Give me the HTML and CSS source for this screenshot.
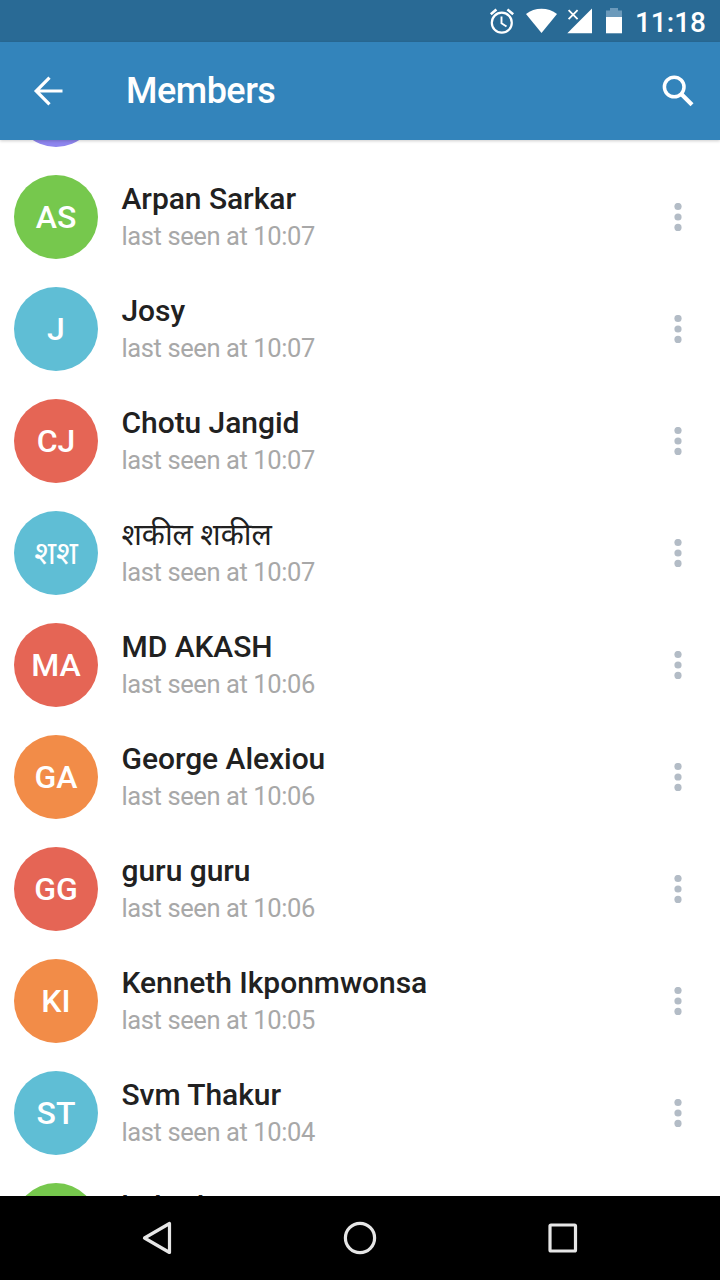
FILE: index.html
```html
<!DOCTYPE html>
<html lang="en">
<head>
<meta charset="utf-8">
<title>Members</title>
<link rel="stylesheet" href="styles.css">
</head>
<body>
<div class="screen">
  <div class="status">
    <svg class="status-icons" width="136" height="42" viewBox="488 0 136 42">
      <g fill="none" stroke="#fff" stroke-width="2.2">
        <circle cx="501.8" cy="22.7" r="10"/>
        <path d="M501.500 16.500v6.700l5 3.300" stroke-width="1.900"/>
        <path d="M490.800 14.200l5.600-4.600M507.400 9.600l5.800 4.600" stroke-width="2.600"/>
        <path d="M568.600 10.200l9 9M577.600 10.200l-9 9" stroke-width="1.800"/>
      </g>
      <path d="M526 14C534.500 7 548.500 7 557 14L541.500 33Z" fill="#fff"/>
      <path d="M592 8.500V33.300H567.300L577 23.500L580.500 20Z" fill="#fff"/>
      <path d="M606 17v-6.500h4V8h8v2.500h4V17z" fill="#6c9abb"/>
      <path d="M606 17h16v16.300h-16z" fill="#fff"/>
    </svg>
    <span class="clock">11:18</span>
  </div>
  <header class="bar">
    <svg class="back" width="32" height="32" viewBox="0 0 32 32"><path d="M30.500 16H4M17.500 2.700L4.200 16L17.500 29.300" fill="none" stroke="#fff" stroke-width="3.200"/></svg>
    <h1 class="title">Members</h1>
    <svg class="search" width="32" height="32" viewBox="0 0 32 32"><g fill="none" stroke="#fff"><circle cx="12.200" cy="12" r="9.800" stroke-width="3.500"/><path d="M19.500 19.300L30 29.800" stroke-width="4.200"/></g></svg>
  </header>
  <main class="list">
    <div class="row"><div class="avatar violet"></div></div>
    <div class="row"><div class="avatar green">AS</div><div class="info"><div class="name">Arpan Sarkar</div><div class="seen">last seen at 10:07</div></div><svg class="more" width="8" height="28"><circle cx="4" cy="3.500" r="3.600"/><circle cx="4" cy="14" r="3.600"/><circle cx="4" cy="24.400" r="3.600"/></svg></div>
    <div class="row"><div class="avatar cyan">J</div><div class="info"><div class="name">Josy</div><div class="seen">last seen at 10:07</div></div><svg class="more" width="8" height="28"><circle cx="4" cy="3.500" r="3.600"/><circle cx="4" cy="14" r="3.600"/><circle cx="4" cy="24.400" r="3.600"/></svg></div>
    <div class="row"><div class="avatar red">CJ</div><div class="info"><div class="name">Chotu Jangid</div><div class="seen">last seen at 10:07</div></div><svg class="more" width="8" height="28"><circle cx="4" cy="3.500" r="3.600"/><circle cx="4" cy="14" r="3.600"/><circle cx="4" cy="24.400" r="3.600"/></svg></div>
    <div class="row"><div class="avatar cyan hindi" lang="hi">शश</div><div class="info"><div class="name hindi" lang="hi">शकील शकील</div><div class="seen">last seen at 10:07</div></div><svg class="more" width="8" height="28"><circle cx="4" cy="3.500" r="3.600"/><circle cx="4" cy="14" r="3.600"/><circle cx="4" cy="24.400" r="3.600"/></svg></div>
    <div class="row"><div class="avatar red">MA</div><div class="info"><div class="name">MD AKASH</div><div class="seen">last seen at 10:06</div></div><svg class="more" width="8" height="28"><circle cx="4" cy="3.500" r="3.600"/><circle cx="4" cy="14" r="3.600"/><circle cx="4" cy="24.400" r="3.600"/></svg></div>
    <div class="row"><div class="avatar orange">GA</div><div class="info"><div class="name">George Alexiou</div><div class="seen">last seen at 10:06</div></div><svg class="more" width="8" height="28"><circle cx="4" cy="3.500" r="3.600"/><circle cx="4" cy="14" r="3.600"/><circle cx="4" cy="24.400" r="3.600"/></svg></div>
    <div class="row"><div class="avatar red">GG</div><div class="info"><div class="name">guru guru</div><div class="seen">last seen at 10:06</div></div><svg class="more" width="8" height="28"><circle cx="4" cy="3.500" r="3.600"/><circle cx="4" cy="14" r="3.600"/><circle cx="4" cy="24.400" r="3.600"/></svg></div>
    <div class="row"><div class="avatar orange">KI</div><div class="info"><div class="name">Kenneth Ikponmwonsa</div><div class="seen">last seen at 10:05</div></div><svg class="more" width="8" height="28"><circle cx="4" cy="3.500" r="3.600"/><circle cx="4" cy="14" r="3.600"/><circle cx="4" cy="24.400" r="3.600"/></svg></div>
    <div class="row"><div class="avatar cyan">ST</div><div class="info"><div class="name">Svm Thakur</div><div class="seen">last seen at 10:04</div></div><svg class="more" width="8" height="28"><circle cx="4" cy="3.500" r="3.600"/><circle cx="4" cy="14" r="3.600"/><circle cx="4" cy="24.400" r="3.600"/></svg></div>
    <div class="row"><div class="avatar green"></div><div class="info"><div class="name">habad</div><div class="seen">&nbsp;</div></div></div>
  </main>
  <nav class="nav">
    <svg width="34" height="36" viewBox="0 0 34 36"><path d="M29.500 3.500V32.500L4.500 18Z"/></svg>
    <svg width="34" height="36" viewBox="0 0 34 36"><circle cx="17" cy="18" r="14.600"/></svg>
    <svg width="34" height="36" viewBox="0 0 34 36"><rect x="4" y="5" width="25.500" height="26" rx="1"/></svg>
  </nav>
</div>
</body>
</html>
```
FILE: styles.css
```css
body {
  margin: 0;
  background: #fff;
  font-family: Roboto, "Noto Sans", "Noto Sans Devanagari", sans-serif;
}
.screen {
  width: 720px;
  height: 1280px;
  display: flex;
  flex-direction: column;
  overflow: hidden;
}
.status {
  height: 42px;
  flex: none;
  display: flex;
  justify-content: flex-end;
  align-items: center;
  gap: 11px;
  padding-right: 14px;
  box-sizing: border-box;
  background: #296a95;
  color: #fff;
}
.clock {
  font-size: 28px;
  font-weight: 500;
  line-height: 42px;
  padding-top: 3px;
}
.bar {
  height: 98px;
  flex: none;
  display: flex;
  align-items: center;
  padding: 0 26px 0 32px;
  box-sizing: border-box;
  background: #3384bb;
  color: #fff;
  box-shadow: 0 1px 3px rgba(0, 0, 0, .2);
  z-index: 1;
}
.title {
  flex: 1;
  margin: 0 0 0 62px;
  font-size: 36px;
  letter-spacing: -.5px;
  line-height: 42px;
  font-weight: 500;
}
.list {
  flex: 1;
  min-height: 0;
  overflow: hidden;
  background: #fff;
}
.row {
  height: 112px;
  display: flex;
  align-items: center;
  padding: 0 38px 0 14px;
}
.row:first-child {
  margin-top: -91.500px;
}
.avatar {
  width: 84px;
  height: 84px;
  flex: none;
  border-radius: 50%;
  color: #fff;
  font-size: 32px;
  font-weight: 500;
  line-height: 84px;
  text-align: center;
}
.violet { background: #8e85ee; }
.green { background: #76c84d; }
.cyan { background: #5fbed5; }
.red { background: #e56555; }
.orange { background: #f28c48; }
.info {
  flex: 1;
  margin-left: 23.500px;
  padding-top: 2px;
  white-space: nowrap;
}
.name {
  height: 37px;
  line-height: 36px;
  font-size: 30px;
  letter-spacing: -.05px;
  font-weight: 500;
  color: #212121;
}
.avatar.hindi,
.name.hindi {
  font-weight: 400;
}
.seen {
  height: 36px;
  line-height: 36px;
  font-size: 25.500px;
  letter-spacing: -.4px;
  color: #a8a8a8;
}
.more { fill: #b3bcc6; }
.nav {
  height: 84px;
  flex: none;
  display: flex;
  align-items: center;
  justify-content: center;
  gap: 169px;
  background: #000;
}
.nav svg {
  fill: none;
  stroke: #e6e6e6;
  stroke-width: 3.200;
  stroke-linejoin: round;
}
```
